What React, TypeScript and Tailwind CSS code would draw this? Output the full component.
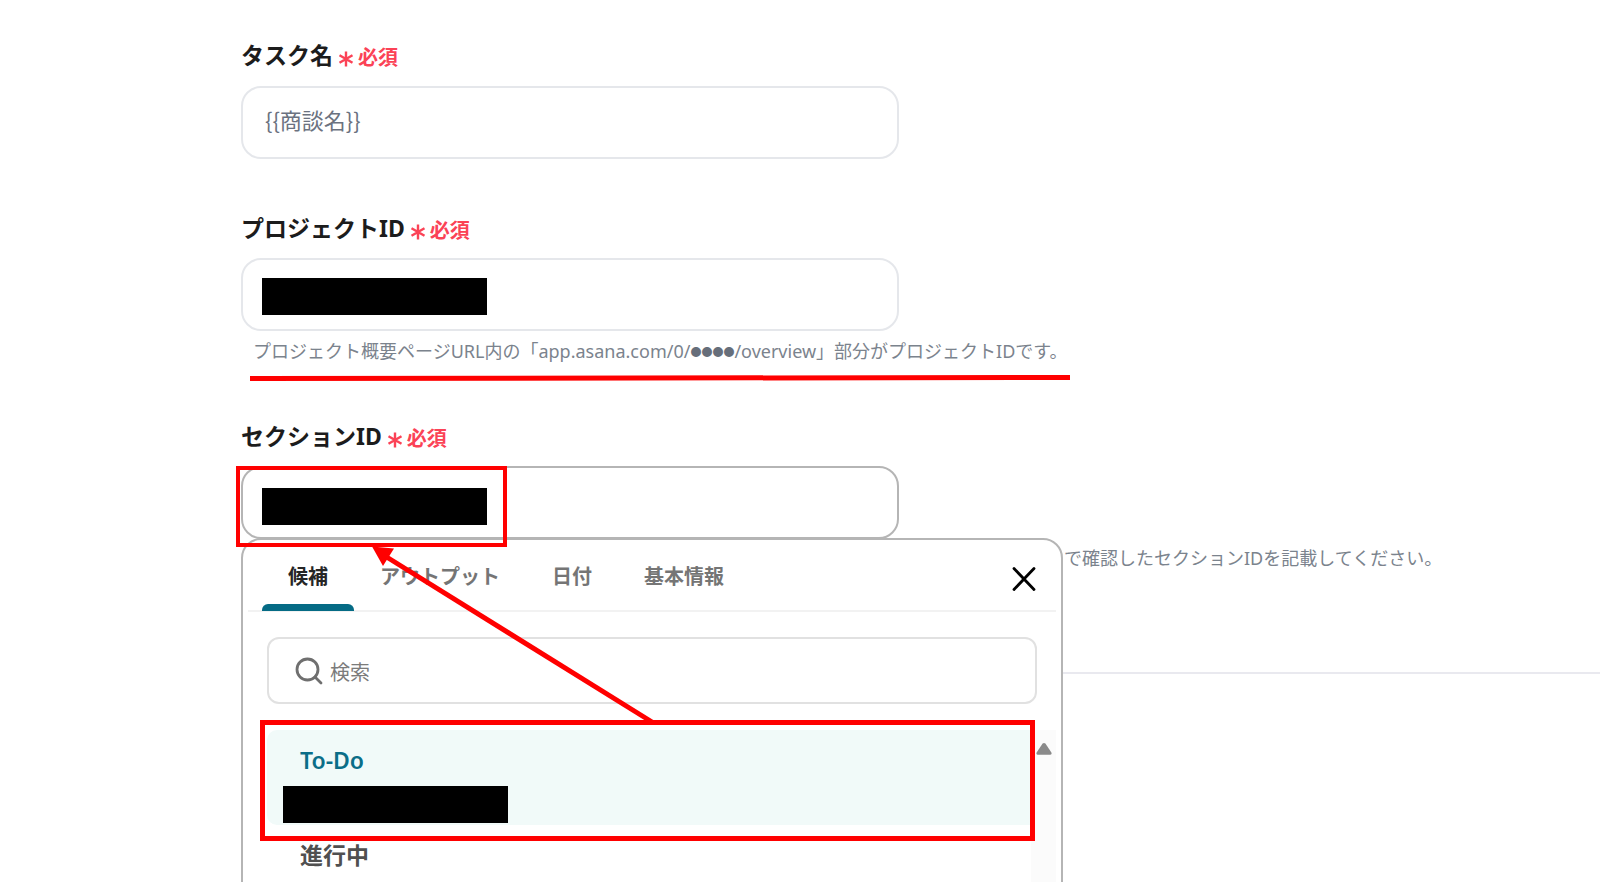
import { useState } from 'react';
import type { ReactNode } from 'react';

function Label({ htmlFor, children }: { htmlFor: string; children: ReactNode }) {
  return (
    <label htmlFor={htmlFor} className="flex h-8 items-center gap-[5px] text-[23px] leading-8 font-bold text-[#1c1c1c]">
      <span>{children}</span>
      <span className="flex items-center gap-1 pt-1.5 text-xl leading-7 text-[#fb4256]">
        <svg viewBox="0 0 16 16" className="mt-0.5 size-4" fill="none" stroke="currentColor" strokeWidth="2.4" aria-hidden="true">
          <path d="M8 0.5v15M1.5 4.2l13 7.6M14.5 4.2l-13 7.6" />
        </svg>
        必須
      </span>
    </label>
  );
}

function Mask({ className }: { className: string }) {
  return <span aria-hidden="true" className={`absolute h-[37px] w-[225px] bg-black ${className}`} />;
}

const inputClass =
  "block h-[73px] w-full rounded-[20px] border-2 bg-white px-[22px] pb-2 font-['Noto_Sans_CJK_JP',sans-serif] text-[22px] text-[#6b7280] outline-none";

const tabs = ['候補', 'アウトプット', '日付', '基本情報'];

function Suggestions() {
  const [active, setActive] = useState(0);
  return (
    <div className="absolute top-full left-0 z-10 -mt-px h-[420px] w-[822px] rounded-t-[20px] border-2 border-[#b5b5b5] bg-white px-[5px]">
      <div className="flex h-[72px] items-stretch justify-between border-b-2 border-[#f2f2f2] pr-5 pl-3.5">
        <div className="flex" role="tablist">
          {tabs.map((name, i) => (
            <button
              key={name}
              type="button"
              role="tab"
              aria-selected={i === active}
              onClick={() => setActive(i)}
              className={`relative px-[26px] pt-1 text-xl font-bold ${i === active ? 'text-[#262626]' : 'text-[#757575]'}`}
            >
              {name}
              {i === active && <span className="absolute inset-x-0 -bottom-px h-[7px] rounded-t-md bg-[#056b85]" />}
            </button>
          ))}
        </div>
        <button type="button" aria-label="閉じる" className="flex items-center pt-2">
          <svg viewBox="0 0 24 24" className="size-6" fill="none" stroke="#000" strokeWidth="2.8" strokeLinecap="round">
            <path d="M2 1.5l20 21M22 1.5l-20 21" />
          </svg>
        </button>
      </div>
      <div className="px-[19px] pt-[25px]">
        <label className="flex h-[67px] items-center gap-[7px] rounded-xl border-2 border-[#e1e1e1] px-[26px]">
          <svg viewBox="0 0 28 28" className="size-7 shrink-0" fill="none" stroke="#6f6f6f" strokeWidth="2.8" strokeLinecap="round" aria-hidden="true">
            <circle cx="12.5" cy="12.5" r="10.5" />
            <path d="M20 20l6 6" />
          </svg>
          <input
            type="search"
            aria-label="検索"
            placeholder="検索"
            className="w-full bg-transparent pt-1 text-xl outline-none placeholder:text-[#7b7b7b] placeholder:opacity-100"
          />
        </label>
      </div>
      <div className="mt-[26px] flex h-[200px]">
        <ul className="grow pl-[19px]">
          <li className="relative">
            <button type="button" className="flex h-[95px] w-full items-start rounded-l-[10px] bg-[#f1faf9] px-[33px] pt-3.5 text-left text-[23px] leading-8 font-semibold text-[#0b6e88]">
              To-Do
            </button>
            <Mask className="top-14 left-4" />
            <span aria-hidden="true" className="absolute -top-2.5 -right-1 -left-[7px] h-[121px] border-[5px] border-[#f00]" />
          </li>
          <li>
            <button type="button" className="flex h-[95px] w-full items-start px-[33px] pt-3.5 text-left text-[23px] leading-8 font-bold text-[#505050]">
              進行中
            </button>
          </li>
        </ul>
        <div className="flex w-[25px] items-start justify-center bg-[#fbfbfb] pt-3">
          <svg viewBox="0 0 16 14" className="h-3.5 w-4" fill="#8a8a8a" aria-hidden="true">
            <path d="M6.6 1.6Q8 .2 9.4 1.6L15.4 10.4Q16.2 12.6 14.4 12.8H1.6Q-.2 12.6 .6 10.4Z" />
          </svg>
        </div>
      </div>
    </div>
  );
}

export default function App() {
  return (
    <main
      lang="ja"
      className="h-screen overflow-hidden bg-white pt-[39px] font-['Noto_Sans','Noto_Sans_CJK_JP',sans-serif]"
    >
      <form className="flex flex-col pl-[241px]">
        <div className="flex flex-col">
          <Label htmlFor="task">タスク名</Label>
          <div className="mt-[15px] max-w-[658px]">
            <input id="task" defaultValue="{{商談名}}" className={`${inputClass} border-[#e5e7eb]`} />
          </div>
        </div>

        <div className="mt-[53px] flex flex-col">
          <Label htmlFor="project">プロジェクトID</Label>
          <div className="relative mt-3.5 max-w-[658px]">
            <input id="project" className={`${inputClass} border-[#e5e7eb]`} />
            <Mask className="top-5 left-[21px]" />
          </div>
          <p className="relative mt-1.5 w-fit pl-3 text-lg leading-7 whitespace-nowrap text-[#7b838d]">
            プロジェクト概要ページURL内の「app.asana.com/0/
            <span className="inline-block align-[2px] text-[11px] leading-3 text-[#666e7a]">●●●●</span>
            /overview」部分がプロジェクトIDです。
            <svg viewBox="0 0 820 8" className="absolute top-[37px] left-[9px] h-2 w-[820px]" stroke="#f00" strokeWidth="5" aria-hidden="true">
              <path d="M0 4.5L820 3.5" />
            </svg>
          </p>
        </div>

        <div className="mt-[55px] flex flex-col">
          <Label htmlFor="section">セクションID</Label>
          <div className="relative mt-3.5 max-w-[658px]">
            <input id="section" className={`${inputClass} border-[#b5b5b5]`} />
            <Mask className="top-[22px] left-[21px]" />
            <Suggestions />
            <span aria-hidden="true" className="absolute top-0 -left-[5px] z-20 h-[81px] w-[271px] border-4 border-[#f00]" />
            <svg viewBox="0 0 290 180" className="absolute top-20 left-[130px] z-20 h-[180px] w-[290px]" aria-hidden="true">
              <path d="M14 10L281 176" stroke="#f00" strokeWidth="5" />
              <path d="M1 0.5L23 2.5L12 20Z" fill="#f00" />
            </svg>
          </div>
          <p className="mt-[5px] pl-[823px] text-lg leading-7 whitespace-nowrap text-[#7b838d]">
            で確認したセクションIDを記載してください。
          </p>
        </div>
      </form>
      <hr className="mt-[100px] ml-[241px] border-t-2 border-[#e9e9ef]" />
    </main>
  );
}
